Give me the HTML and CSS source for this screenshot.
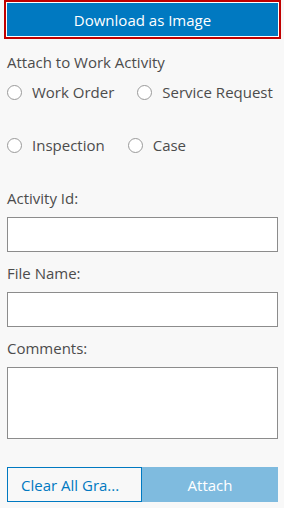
FILE: index.html
```html
<!DOCTYPE html>
<html lang="en">
<head>
  <meta charset="UTF-8">
  <meta name="viewport" content="width=device-width, initial-scale=1.0">
  <title>Screenshot</title>
  <link rel="stylesheet" href="styles.css">
</head>
<body>
  <div class="panel">
    <button class="download-btn" type="button">Download as Image</button>

    <!-- Attach to work activity -->
    <div class="section-label">Attach to Work Activity</div>
    <div class="radio-row">
      <label class="radio"><span class="radio-circle"></span>Work Order</label>
      <label class="radio"><span class="radio-circle"></span>Service Request</label>
    </div>
    <div class="radio-row second">
      <label class="radio"><span class="radio-circle"></span>Inspection</label>
      <label class="radio"><span class="radio-circle"></span>Case</label>
    </div>

    <div class="field first">
      <div class="field-label">Activity Id:</div>
      <div class="text-box"></div>
    </div>
    <div class="field">
      <div class="field-label">File Name:</div>
      <div class="text-box"></div>
    </div>
    <div class="field">
      <div class="field-label">Comments:</div>
      <div class="text-box area"></div>
    </div>

    <div class="actions">
      <button class="btn-clear" type="button">Clear All Gra...</button>
      <button class="btn-attach" type="button">Attach</button>
    </div>
  </div>
</body>
</html>
```

FILE: styles.css
```css
body {
  margin: 0;
  background: #f8f8f8;
  font-family: "Open Sans", Arial, sans-serif;
  font-size: 15px;
  color: #4c4c4c;
}
.panel {
  padding: 2px 6px 0 7px;
}
.download-btn {
  display: block;
  width: 273px;
  height: 35px;
  margin-left: -1px;
  background: #0079c1;
  color: #fff;
  border: 1px solid #fff;
  outline: 2px solid #c00000;
  font-family: inherit;
  font-size: 15px;
  padding: 0;
}
.section-label {
  margin-top: 15px;
  line-height: 20px;
}
.radio-row {
  display: flex;
  margin-top: 10px;
  height: 20px;
  align-items: center;
}
.radio-row.second {
  margin-top: 33px;
}
.radio {
  display: flex;
  align-items: center;
  flex-shrink: 0;
  white-space: nowrap;
  margin-right: 23px;
  line-height: 20px;
}
.radio-circle {
  width: 13px;
  height: 13px;
  border: 1px solid #9a9a9a;
  border-radius: 50%;
  background: #fff;
  margin-right: 10px;
}
.field {
  margin-top: 11px;
}
.field.first {
  margin-top: 33px;
}
.field-label {
  line-height: 20px;
  margin-bottom: 9px;
}
.text-box {
  height: 33px;
  background: #fff;
  border: 1px solid #8c8c8c;
}
.text-box.area {
  height: 70px;
}
.actions {
  display: grid;
  grid-template-columns: 135px 136px;
  margin-top: 28px;
}
.btn-clear, .btn-attach {
  width: 100%;
  min-width: 0;
  height: 35px;
  font-family: inherit;
  font-size: 15px;
  padding: 0;
}
.btn-clear {
  background: transparent;
  color: #0079c1;
  border: 1px solid #0079c1;
  text-align: left;
  padding-left: 13px;
  white-space: nowrap;
  overflow: hidden;
}
.btn-attach {
  background: #7fbbdf;
  color: #fff;
  border: none;
}
```
